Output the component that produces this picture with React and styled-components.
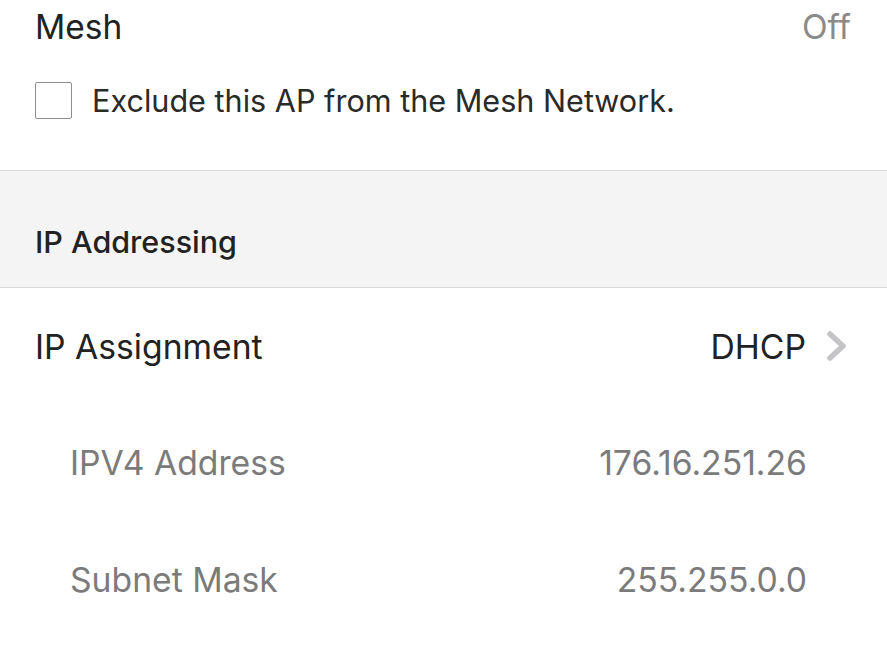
import React from "react";
import styled, { createGlobalStyle } from "styled-components";

const GlobalStyle = createGlobalStyle`
  html, body {
    margin: 0;
    padding: 0;
    background: #ffffff;
    font-family: Inter, "Liberation Sans", sans-serif;
  }
`;

const Page = styled.div`
  width: 887px;
  height: 663px;
  overflow: hidden;
  background: #fff;
  display: flex;
  flex-direction: column;
`;

const TopRow = styled.div`
  display: flex;
  justify-content: space-between;
  align-items: center;
  height: 54px;
  padding: 0 36px 0 35px;
`;

const Title = styled.span`
  font-size: 33.5px;
  color: #222;
`;

const Muted = styled.span`
  font-size: 33.5px;
  color: #8a8a8a;
`;

const CheckRow = styled.label`
  display: flex;
  align-items: center;
  gap: 20px;
  height: 92px;
  padding: 0 35px;
  font-size: 30.6px;
  color: #2a2a2a;
`;

const Box = styled.span`
  width: 37px;
  height: 37px;
  border: 1px solid #8f8f8f;
  border-radius: 2px;
  box-sizing: border-box;
  flex: none;
`;

const Gap = styled.div`
  height: 24px;
`;

const SectionHeader = styled.div`
  display: flex;
  align-items: flex-end;
  height: 118px;
  padding: 0 35px 27px;
  box-sizing: border-box;
  background: #f4f4f4;
  border-top: 1px solid #d9d9d9;
  border-bottom: 1px solid #d9d9d9;
  font-size: 30.5px;
  font-weight: 500;
  color: #222;
`;

const Row = styled.div`
  display: flex;
  justify-content: space-between;
  align-items: center;
  height: ${(p) => p.h || 117}px;
  padding: 0 ${(p) => (p.sub ? 80 : 39)}px 0 ${(p) => (p.sub ? 70 : 35)}px;
`;

const Label = styled.span`
  font-size: 33.7px;
  color: ${(p) => (p.sub ? "#7b7b7b" : "#222")};
`;

const Value = styled.span`
  display: flex;
  align-items: center;
  gap: 20px;
  font-size: 33.7px;
  color: ${(p) => (p.sub ? "#7b7b7b" : "#222")};
`;

const Chevron = () => (
  <svg width="22" height="32" viewBox="0 0 22 32">
    <polyline
      points="4,4 17,16 4,28"
      fill="none"
      stroke="#c4c4c7"
      strokeWidth="5.5"
      strokeLinecap="round"
      strokeLinejoin="round"
    />
  </svg>
);

export default function App() {
  return (
    <Page>
      <GlobalStyle />
      <TopRow>
        <Title>Mesh</Title>
        <Muted>Off</Muted>
      </TopRow>
      <CheckRow>
        <Box />
        Exclude this AP from the Mesh Network.
      </CheckRow>
      <Gap />
      <SectionHeader>IP Addressing</SectionHeader>
      <Row h={116}>
        <Label>IP Assignment</Label>
        <Value>
          DHCP
          <Chevron />
        </Value>
      </Row>
      <Row sub>
        <Label sub>IPV4 Address</Label>
        <Value sub>176.16.251.26</Value>
      </Row>
      <Row sub>
        <Label sub>Subnet Mask</Label>
        <Value sub>255.255.0.0</Value>
      </Row>
    </Page>
  );
}
